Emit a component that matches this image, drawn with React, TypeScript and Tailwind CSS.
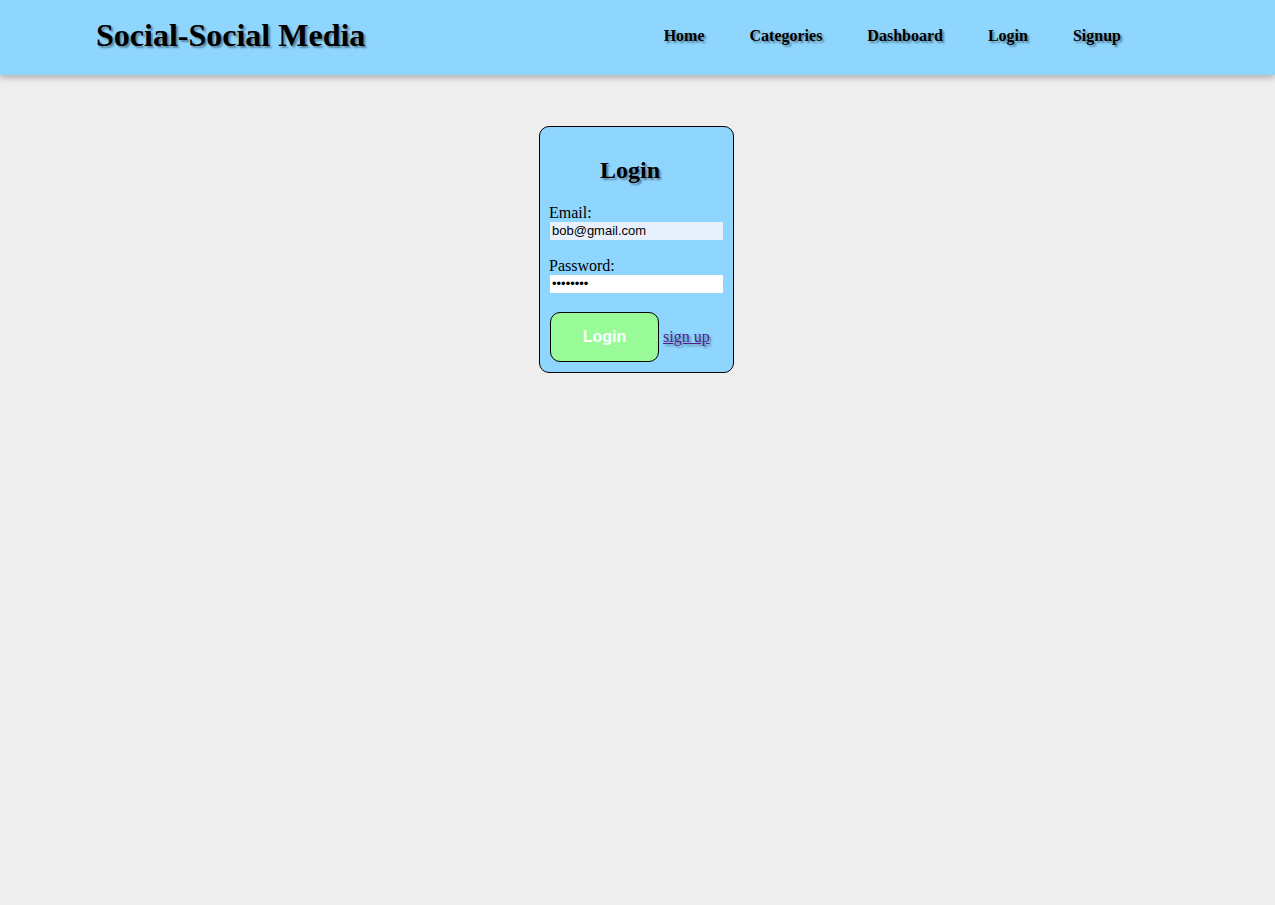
import { useState } from "react";

const shadow = "[text-shadow:2px_2px_2px_rgba(0,0,0,0.4)]";

export default function App() {
  const [email, setEmail] = useState("bob@gmail.com");
  const [password, setPassword] = useState("password");

  return (
    <div className="min-h-[905px] bg-[#eeeeee] font-['Liberation_Serif',serif] text-black">
      <header className="flex h-[75px] items-center justify-between bg-[#8fd6ff] pb-[5px] pl-[96px] pr-[154px] shadow-[0_3px_6px_rgba(0,0,0,0.25)]">
        <h1 className={`text-[32px] font-bold leading-none ${shadow}`}>Social-Social Media</h1>
        <nav className={`mt-[2px] flex gap-[45px] text-[16px] font-bold ${shadow}`}>
          <a href="#">Home</a>
          <a href="#">Categories</a>
          <a href="#">Dashboard</a>
          <a href="#">Login</a>
          <a href="#">Signup</a>
        </nav>
      </header>

      <main className="flex justify-center pt-[51px]">
        <form
          onSubmit={(event) => event.preventDefault()}
          className="ml-[-2px] flex w-[195px] flex-col rounded-[10px] border border-black bg-[#8fd6ff] p-[9px] pb-[10px]"
        >
          <h2 className={`mt-[21px] mb-[20px] pl-[51px] text-[24px] font-bold leading-[27px] ${shadow}`}>
            Login
          </h2>
          <label className="flex flex-col text-[16px] leading-[18px]">
            <span>Email:</span>
            <input
              type="email"
              value={email}
              onChange={(event) => setEmail(event.target.value)}
              className="ml-px h-[18px] w-[173px] bg-[#e8f0fe] px-[2px] font-['Liberation_Sans',sans-serif] text-[13px] outline-none"
            />
          </label>
          <label className="mt-[17px] flex flex-col text-[16px] leading-[18px]">
            <span>Password:</span>
            <input
              type="password"
              value={password}
              onChange={(event) => setPassword(event.target.value)}
              className="ml-px h-[18px] w-[173px] bg-white px-[2px] font-['Liberation_Sans',sans-serif] text-[13px] outline-none"
            />
          </label>
          <div className="mt-[19px] flex items-center gap-[4px]">
            <button
              type="submit"
              className="ml-px h-[50px] w-[109px] rounded-[10px] border border-black bg-[#98fb98] font-['Liberation_Sans',sans-serif] text-[16px] font-bold text-white"
            >
              Login
            </button>
            <a href="#" className={`text-[16px] text-[#551a8b] underline ${shadow}`}>
              sign up
            </a>
          </div>
        </form>
      </main>
    </div>
  );
}
